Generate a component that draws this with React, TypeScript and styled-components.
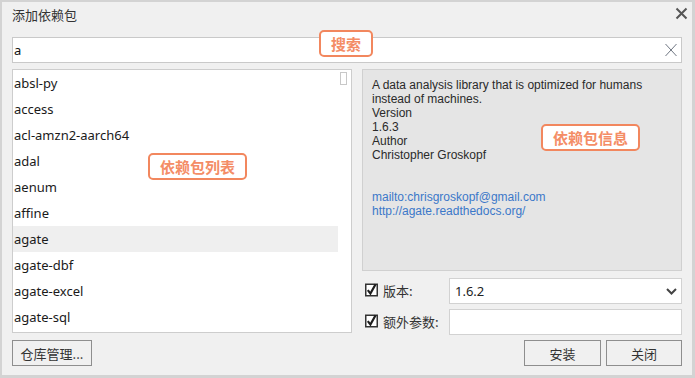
import React from 'react';
import styled, { createGlobalStyle } from 'styled-components';

const GlobalStyle = createGlobalStyle`
  html, body { margin: 0; padding: 0; background: #fff; }
  * { box-sizing: border-box; }
`;

const ui = `"Noto Sans", "Noto Sans CJK SC", sans-serif`;
const cjk = `"Noto Sans CJK SC", "Noto Sans", sans-serif`;

const Window = styled.div`
  width: 695px;
  height: 378px;
  background: #f0f0f0;
  border-style: solid;
  border-color: #d3d3d3;
  border-width: 2px 3px 3px 2px;
  display: flex;
  flex-direction: column;
  font-family: ${ui};
  color: #222;
`;

const TitleBar = styled.div`
  height: 35px;
  padding: 4px 4px 0 10px;
  display: flex;
  justify-content: space-between;
  align-items: flex-start;
`;

const Title = styled.div`
  font-family: ${cjk};
  font-size: 13px;
  line-height: 18px;
  color: #333;
`;

const CloseButton = styled.button`
  border: none;
  background: none;
  padding: 0;
  margin-top: 1px;
  width: 13px;
  height: 13px;
  display: flex;

  svg { width: 13px; height: 13px; }
`;

const Body = styled.div`
  padding: 0 10px;
  display: flex;
  flex-direction: column;
`;

const Search = styled.div`
  position: relative;
  height: 26px;
  background: #fff;
  border: 1px solid #c9c9c9;
  display: flex;
  align-items: center;
  padding: 0 4px 0 1px;
  margin-bottom: 6px;
`;

const SearchInput = styled.input`
  flex: 1;
  border: none;
  outline: none;
  background: none;
  padding: 0;
  font-family: ${ui};
  font-size: 13px;
  color: #111;
`;

const ClearIcon = styled.svg`
  width: 12px;
  height: 14px;
`;

const Badge = styled.div<{ $left: number; $top: number }>`
  position: absolute;
  left: ${p => p.$left}px;
  top: ${p => p.$top}px;
  height: 27px;
  padding: 0 10px;
  background: #fff;
  border: 2px solid #f2875e;
  border-radius: 5px;
  display: flex;
  align-items: center;
  font-family: ${cjk};
  font-weight: 700;
  font-size: 15px;
  color: #f48d66;
  white-space: nowrap;
`;

const Columns = styled.div`
  height: 297px;
  display: grid;
  grid-template-columns: 340px 320px;
  column-gap: 10px;
`;

const LeftColumn = styled.div`
  display: flex;
  flex-direction: column;
  gap: 7px;
`;

const RightColumn = styled.div`
  display: flex;
  flex-direction: column;
`;

const List = styled.div`
  position: relative;
  flex: 1;
  background: #fff;
  border: 1px solid #cdcdcd;
  display: flex;
  overflow: hidden;
`;

const Items = styled.div`
  flex: 1;
  padding-top: 0;
`;

const Item = styled.div<{ $selected?: boolean }>`
  height: 26px;
  line-height: 26px;
  padding-left: 1px;
  font-size: 13px;
  color: #1a1a1a;
  background: ${p => (p.$selected ? '#efefef' : 'transparent')};
`;

const Track = styled.div`
  width: 13px;
  padding: 2px 4px 0 2px;
`;

const Thumb = styled.div`
  height: 13px;
  border: 1px solid #c8c8c8;
  background: #fff;
`;

const Info = styled.div`
  position: relative;
  flex: 1;
  background: #e5e5e5;
  border: 1px solid #d0d0d0;
  padding: 8px 9px;
  font-family: "Liberation Sans", Arial, sans-serif;
  font-size: 12px;
  line-height: 14px;
  color: #2a2a2a;
`;

const Line = styled.div`
  min-height: 14px;
`;

const Link = styled.a`
  display: block;
  color: #3b78c9;
  text-decoration: none;
`;

const OptionRow = styled.div<{ $gap: number }>`
  margin-top: ${p => p.$gap}px;
  height: 26px;
  display: flex;
  align-items: center;
  padding-left: 3px;
`;

const CheckIcon = styled.svg`
  width: 13px;
  height: 14px;
  flex-shrink: 0;
  margin-top: -2px;
`;

const Label = styled.span`
  flex: 1;
  margin-left: 5px;
  margin-top: -2px;
  font-family: ${cjk};
  font-size: 13px;
  color: #333;
`;

const Field = styled.div`
  width: 233px;
  height: 100%;
  background: #fff;
  border: 1px solid #d2d2d2;
  display: flex;
  align-items: center;
  justify-content: space-between;
  padding: 0 4px 0 5px;
  font-size: 13px;
  color: #222;
`;

const Chevron = styled.svg`
  width: 11px;
  height: 7px;
`;

const ButtonRow = styled.div`
  margin-top: 5px;
  display: flex;
  justify-content: flex-end;
  gap: 5px;
`;

const Button = styled.button<{ $width: number }>`
  width: ${p => p.$width}px;
  height: 26px;
  padding: 0;
  background: #f0f0f0;
  border: 1px solid #8e8e8e;
  font-family: ${cjk};
  font-size: 13px;
  color: #333;
`;

const packages = [
  'absl-py', 'access', 'acl-amzn2-aarch64', 'adal', 'aenum',
  'affine', 'agate', 'agate-dbf', 'agate-excel', 'agate-sql',
];

const Check = () => (
  <CheckIcon viewBox="0 0 13 14">
    <rect x="0.75" y="1.25" width="11.5" height="11.5" fill="#fff" stroke="#333" strokeWidth="1.5" />
    <path d="M2.8 7.2 L5.4 10.6 L10.6 1.2" fill="none" stroke="#1e1e1e" strokeWidth="2.2" />
  </CheckIcon>
);

export default function App() {
  return (
    <>
      <GlobalStyle />
      <Window>
        <TitleBar>
          <Title>添加依赖包</Title>
          <CloseButton>
            <svg viewBox="0 0 13 13">
              <path d="M1.5 1.5 L11.5 11.5 M11.5 1.5 L1.5 11.5" stroke="#555" strokeWidth="2" />
            </svg>
          </CloseButton>
        </TitleBar>

        <Body>
          <Search>
            <SearchInput defaultValue="a" />
            <ClearIcon viewBox="0 0 12 14">
              <path d="M0.5 1 L11.5 13 M11.5 1 L0.5 13" stroke="#707783" strokeWidth="1" />
            </ClearIcon>
            <Badge $left={306} $top={-8}>搜索</Badge>
          </Search>

          <Columns>
            <LeftColumn>
              <List>
                <Items>
                  {packages.map(p => (
                    <Item key={p} $selected={p === 'agate'}>{p}</Item>
                  ))}
                </Items>
                <Track><Thumb /></Track>
                <Badge $left={135} $top={83}>依赖包列表</Badge>
              </List>
              <Button $width={80}>仓库管理...</Button>
            </LeftColumn>

            <RightColumn>
              <Info>
                <Line>A data analysis library that is optimized for humans</Line>
                <Line>instead of machines.</Line>
                <Line>Version</Line>
                <Line>1.6.3</Line>
                <Line>Author</Line>
                <Line>Christopher Groskopf</Line>
                <Line />
                <Line />
                <Link href="#">mailto:chrisgroskopf@gmail.com</Link>
                <Link href="#">http://agate.readthedocs.org/</Link>
                <Badge $left={178} $top={54}>依赖包信息</Badge>
              </Info>

              <OptionRow $gap={7}>
                <Check />
                <Label>版本:</Label>
                <Field>
                  1.6.2
                  <Chevron viewBox="0 0 11 7">
                    <path d="M1 1 L5.5 5.5 L10 1" fill="none" stroke="#444" strokeWidth="2" />
                  </Chevron>
                </Field>
              </OptionRow>

              <OptionRow $gap={5}>
                <Check />
                <Label>额外参数:</Label>
                <Field />
              </OptionRow>

              <ButtonRow>
                <Button $width={77}>安装</Button>
                <Button $width={76}>关闭</Button>
              </ButtonRow>
            </RightColumn>
          </Columns>
        </Body>
      </Window>
    </>
  );
}
